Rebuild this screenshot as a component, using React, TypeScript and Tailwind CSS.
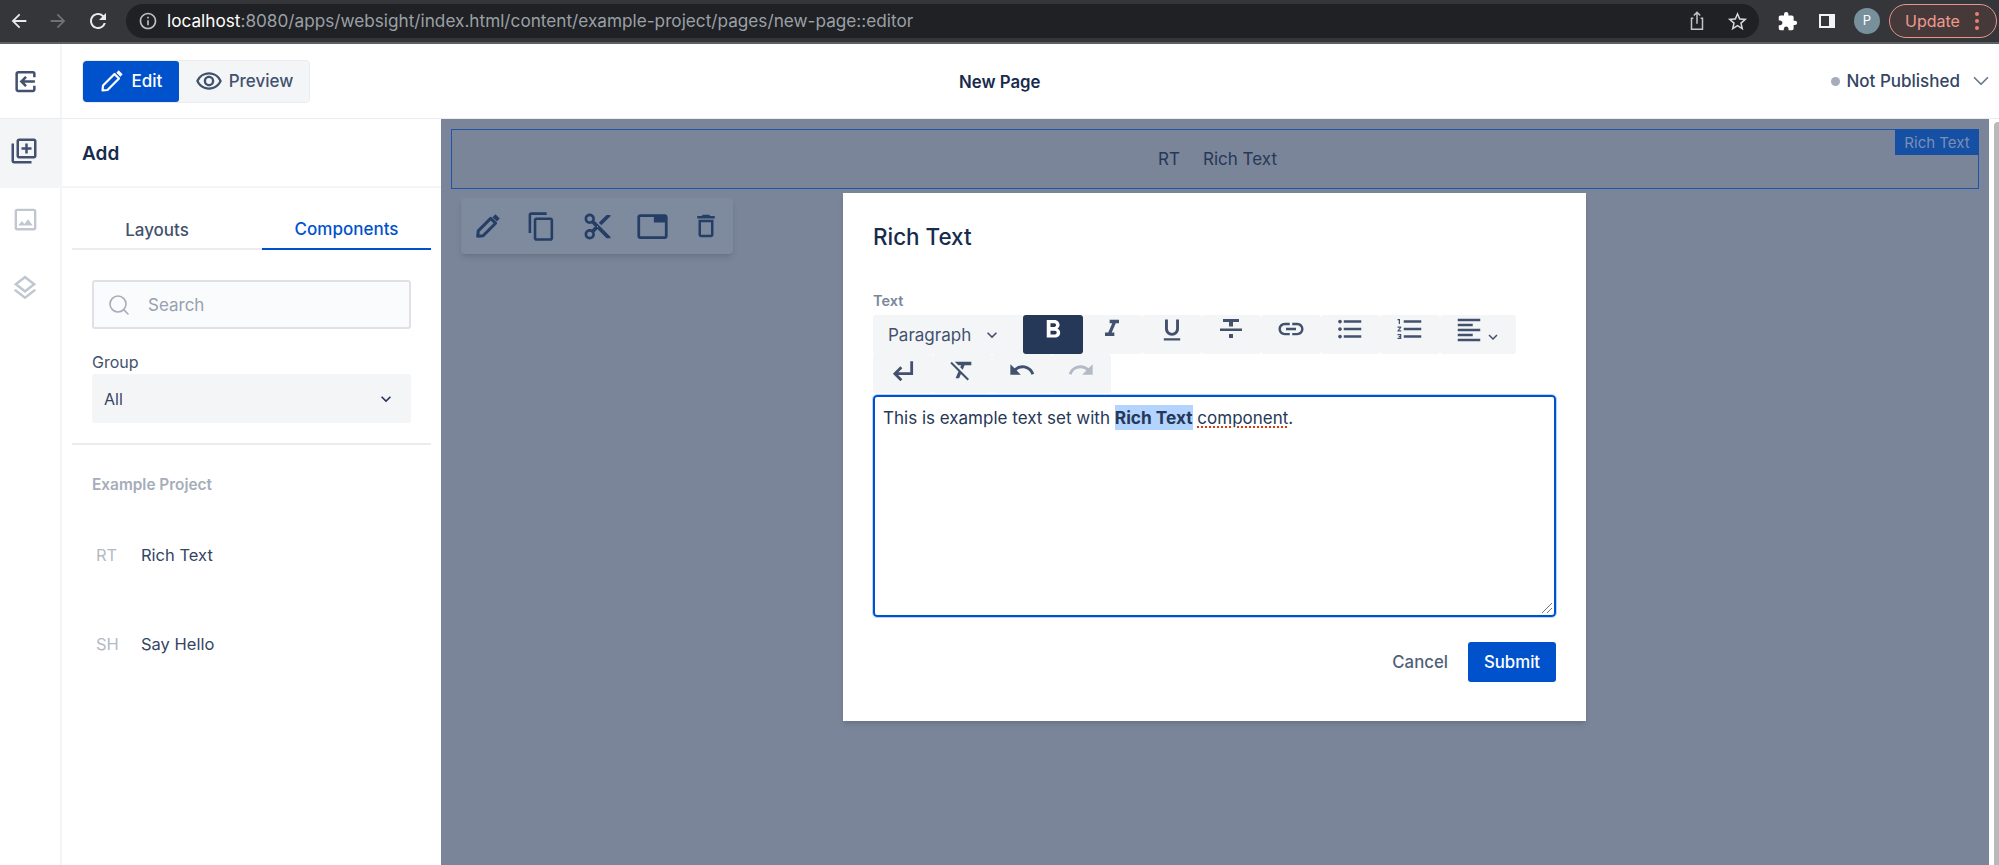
import type { ReactNode } from "react";
import {
  MdOutlineLibraryAdd,
  MdOutlineImage,
  MdOutlineLayers,
  MdOutlineContentCopy,
  MdOutlineContentCut,
  MdOutlineTab,
  MdOutlineDeleteOutline,
  MdOutlineRemoveRedEye,
  MdKeyboardArrowDown,
  MdOutlineInfo,
  MdArrowBack,
  MdArrowForward,
  MdRefresh,
  MdOutlineStarBorder,
  MdExtension,
  MdFormatBold,
  MdFormatItalic,
  MdFormatUnderlined,
  MdLink,
  MdFormatListBulleted,
  MdFormatListNumbered,
  MdFormatAlignLeft,
  MdFormatClear,
  MdUndo,
  MdRedo,
} from "react-icons/md";
import { ChevronDown, Search } from "lucide-react";

function Pencil({ className, weight }: { className?: string; weight: number }) {
  return (
    <svg viewBox="0 0 24 24" fill="none" stroke="currentColor" strokeWidth={weight} strokeLinejoin="round" className={className}>
      <path d="M2.5 21.5 3 16.500 14.500 5 19 9.500 7.500 21Z" />
      <path d="M17.500 2.500 21.500 6.500" strokeWidth={weight + 1} />
    </svg>
  );
}

function ExitIcon() {
  return (
    <svg viewBox="0 0 24 24" fill="none" stroke="#42526e" strokeWidth="2.4" className="h-[25px] w-[25px]">
      <path d="M20.500 8V4.500A1.500 1.500 0 0 0 19 3H5A1.500 1.500 0 0 0 3.500 4.500V19.500A1.500 1.500 0 0 0 5 21H19A1.500 1.500 0 0 0 20.500 19.500V16" />
      <path d="M21 12H8M12.500 7.500 8 12l4.500 4.500" />
    </svg>
  );
}

function ShareIcon() {
  return (
    <svg viewBox="0 0 24 24" fill="none" stroke="#c4c7c5" strokeWidth="1.6" className="h-[22px] w-[22px]">
      <path d="M8 9H6v12h12V9h-2M12 15V3M8.500 6 12 2.500 15.500 6" />
    </svg>
  );
}

function PanelIcon() {
  return (
    <svg viewBox="0 0 20 20" className="h-[20px] w-[20px]">
      <path fill="#f1f3f4" fillRule="evenodd" d="M2 3h16v14H2Zm2 2v10h8V5Z" />
    </svg>
  );
}

function StrikeIcon() {
  return (
    <svg viewBox="0 0 24 24" fill="currentColor" className="h-[24px] w-[24px]">
      <path d="M4 2h16v3h-6v4.500h-4V5H4ZM1 11.500h22v2.500H1ZM10 17h4v4h-4Z" />
    </svg>
  );
}

function ReturnIcon() {
  return (
    <svg viewBox="0 0 24 24" fill="none" stroke="currentColor" strokeWidth="2.6" className="h-[26px] w-[26px]">
      <path d="M20 3v11.500H5M10.500 8.500 4.500 14.500l6 6" />
    </svg>
  );
}

function ToolButton({ children, active, pb }: { children: ReactNode; active?: boolean; pb: string }) {
  return (
    <div className={`flex h-[39px] w-[59.5px] items-center justify-center rounded-[3px] ${pb} ${active ? "bg-[#253858] text-white" : "bg-[#f4f5f7] text-[#42526e]"}`}>
      {children}
    </div>
  );
}

function ChromeBar() {
  return (
    <header className="flex h-[44px] items-center border-b-2 border-[#5f6063] bg-[#35363a]">
      <div className="flex w-[126px] items-center pl-[8px]">
        <MdArrowBack size={22} className="text-[#e8eaed]" />
        <MdArrowForward size={22} className="ml-[17px] text-[#6f7175]" />
        <MdRefresh size={24} className="ml-[17px] text-[#e8eaed]" />
      </div>
      <div className="flex h-[34px] w-[1633px] items-center rounded-full bg-[#202124] pl-[12px]">
        <MdOutlineInfo size={20} className="text-[#bdc1c6]" />
        <span className="ml-[9px] text-[17.2px] whitespace-nowrap text-[#9aa0a6]">
          <span className="text-white">localhost</span>:8080/apps/websight/index.html/content/example-project/pages/new-page::editor
        </span>
        <div className="ml-auto flex items-center gap-[18px] pr-[10px]">
          <ShareIcon />
          <MdOutlineStarBorder size={23} className="text-[#d5d7d8]" />
        </div>
      </div>
      <div className="ml-[18px] flex items-center gap-[19px]">
        <MdExtension size={21} className="text-white" />
        <PanelIcon />
      </div>
      <div className="ml-[17px] flex h-[26px] w-[26px] items-center justify-center rounded-full bg-[#78909c] text-[13px] text-white">P</div>
      <div className="ml-[9px] flex h-[34px] w-[108px] items-center rounded-full border border-[#e8958a] bg-[#46393a] pl-[15px] text-[16px] text-[#ee9a8e]">
        Update
        <span className="ml-[15px] flex flex-col gap-[3px]">
          <i className="h-[4px] w-[4px] rounded-full bg-[#ee7f70]" />
          <i className="h-[4px] w-[4px] rounded-full bg-[#ee7f70]" />
          <i className="h-[4px] w-[4px] rounded-full bg-[#ee7f70]" />
        </span>
      </div>
    </header>
  );
}

function TopBar() {
  return (
    <div className="flex h-[75px] border-b border-[#ebecf0] bg-white">
      <div className="flex w-[62px] shrink-0 items-center justify-start border-r-2 border-[#f4f5f7] pl-[13px]">
        <ExitIcon />
      </div>
      <div className="ml-[21px] flex h-[41px] items-center self-center rounded-[3px] bg-[#f4f5f7] outline outline-[#ebecf0]">
        <div className="flex h-full w-[96px] items-center justify-center gap-[8px] rounded-[3px] bg-[#0052cc] text-[17px] font-medium text-white">
          <Pencil className="h-[24px] w-[24px]" weight={2.2} />
          <span className="pt-[2px]">Edit</span>
        </div>
        <div className="flex h-full w-[130px] items-center justify-center gap-[6px] text-[17px] font-medium text-[#42526e]">
          <MdOutlineRemoveRedEye size={28} />
          <span className="pt-[2px]">Preview</span>
        </div>
      </div>
      <div className="ml-[650px] flex items-center pt-[3px] text-[16.8px] font-semibold text-[#172b4d]">New Page</div>
      <div className="ml-auto flex items-center pr-[5px] text-[17px] font-medium text-[#344563]">
        <i className="mr-[6px] h-[9px] w-[9px] rounded-full bg-[#a5adba]" />
        <span className="pt-[2px]">Not Published</span>
        <ChevronDown size={26} strokeWidth={1.6} className="ml-[8px] text-[#6b778c]" />
      </div>
    </div>
  );
}

function Rail() {
  return (
    <nav className="flex w-[62px] shrink-0 flex-col items-center border-r-2 border-[#f4f5f7] pr-[10px]">
      <div className="-mr-[10px] h-[69px] w-[62px] bg-[#f4f5f7] pt-[17px] pl-[10px]">
        <MdOutlineLibraryAdd size={30} className="text-[#42526e]" />
      </div>
      <MdOutlineImage size={29} className="mt-[17px] text-[#c1c7d0]" />
      <MdOutlineLayers size={30} className="mt-[39px] text-[#c1c7d0]" />
    </nav>
  );
}

function Sidebar() {
  return (
    <aside className="w-[379px] shrink-0 bg-white">
      <div className="flex h-[69px] items-center border-b-2 border-[#f4f5f7] pt-[4px] pl-[20px] text-[19px] font-semibold text-[#172b4d]">Add</div>
      <div className="mx-[10px] mt-[20px]">
        <div className="flex h-[42px] gap-[20px] border-b-2 border-[#ebecf0] text-[17px] font-medium">
          <div className="flex h-[42px] w-[170px] items-center justify-center pt-[4px] text-[#42526e]">Layouts</div>
          <div className="flex h-[42px] w-[169px] items-center justify-center border-b-2 border-[#0052cc] pt-[4px] text-[#0052cc]">Components</div>
        </div>
        <div className="px-[20px]">
          <div className="mt-[30px] flex h-[49px] items-center rounded-[3px] border-2 border-[#dfe1e6] bg-[#fafbfc] pl-[13px] text-[17px] text-[#97a0af]">
            <Search size={24} strokeWidth={1.6} className="text-[#a5adba]" />
            <span className="ml-[17px] pt-[2px]">Search</span>
          </div>
          <div className="mt-[21px] leading-[24px] text-[#42526e]">Group</div>
          <div className="flex h-[49px] items-center justify-between rounded-[3px] bg-[#f4f5f7] pr-[15px] pl-[12px] text-[#344563]">
            All
            <MdKeyboardArrowDown size={20} className="text-[#253858]" />
          </div>
        </div>
        <div className="mt-[20px] border-b-2 border-[#ebecf0]" />
        <div className="mt-[29px] pl-[20px] text-[15.4px] leading-[22px] font-semibold text-[#a5adba]">Example Project</div>
        <div className="mt-[47px] flex h-[24px] items-center pl-[24px] text-[16.5px] text-[#344563]">
          <span className="w-[45px] text-[#b3bac5]">RT</span>
          Rich Text
        </div>
        <div className="mt-[65px] flex h-[24px] items-center pl-[24px] text-[16.5px] text-[#344563]">
          <span className="w-[45px] text-[#b3bac5]">SH</span>
          Say Hello
        </div>
      </div>
    </aside>
  );
}

function Dialog() {
  return (
    <div className="absolute top-[74px] left-[402px] h-[528px] w-[743px] bg-white px-[30px] shadow-md">
      <h2 className="mt-[27px] text-[22.4px] leading-[34px] font-medium text-[#172b4d]">Rich Text</h2>
      <div className="mt-[37px] text-[14.5px] leading-[20px] font-semibold text-[#7a869a]">Text</div>
      <div className="mt-[4px] flex text-[#42526e]">
        <div className="flex h-[39px] w-[150px] items-center rounded-l-[3px] bg-[#f4f5f7] pl-[15px] text-[17px]">
          <span className="pt-[2px]">Paragraph</span>
          <MdKeyboardArrowDown size={20} className="ml-[11px]" />
        </div>
        <ToolButton active pb="pb-[10px]"><MdFormatBold size={30} /></ToolButton>
        <ToolButton pb="pb-[11px]"><MdFormatItalic size={28} /></ToolButton>
        <ToolButton pb="pb-[9px]"><MdFormatUnderlined size={28} /></ToolButton>
        <ToolButton pb="pb-[11px]"><StrikeIcon /></ToolButton>
        <ToolButton pb="pb-[11px]"><MdLink size={30} /></ToolButton>
        <ToolButton pb="pb-[11px]"><MdFormatListBulleted size={30} /></ToolButton>
        <ToolButton pb="pb-[11px]"><MdFormatListNumbered size={30} /></ToolButton>
        <div className="flex h-[39px] w-[76px] items-center justify-center rounded-[3px] bg-[#f4f5f7]">
          <MdFormatAlignLeft size={30} className="mb-[10px]" />
          <MdKeyboardArrowDown size={18} className="mt-[5px]" />
        </div>
      </div>
      <div className="flex">
        <ToolButton pb="pb-[6px]"><ReturnIcon /></ToolButton>
        <ToolButton pb="pb-[7px]"><MdFormatClear size={28} /></ToolButton>
        <ToolButton pb="pb-[7px]"><MdUndo size={28} /></ToolButton>
        <ToolButton pb="pb-[7px]"><span className="text-[#b3bac5]"><MdRedo size={28} /></span></ToolButton>
      </div>
      <div className="relative mt-[2px] h-[222px] rounded-[4px] border-2 border-[#0052cc] pt-[8px] pl-[8px] text-[17px] leading-[25px] text-[#253858] outline outline-[#b3d4ff]">
        This is example text set with <strong className="inline-block bg-[#b3d4ff] text-[17.3px] font-bold">Rich Text</strong>{" "}
        <span className="underline decoration-[#de350b] decoration-dotted decoration-2 underline-offset-2">component</span>.
        <svg viewBox="0 0 12 12" className="absolute right-[1px] bottom-[1px] h-[12px] w-[12px]" stroke="#6b778c" fill="none">
          <path d="M1 11 11 1M6 11 11 6" />
        </svg>
      </div>
      <div className="mt-[25px] flex items-center justify-end text-[16.8px] font-medium">
        <span className="pt-[2px] text-[#505f79]">Cancel</span>
        <div className="ml-[20px] flex h-[40px] w-[88px] items-center justify-center rounded-[3px] bg-[#0052cc] pt-[2px] text-white">Submit</div>
      </div>
    </div>
  );
}

function Canvas() {
  return (
    <div className="flex flex-1">
      <main className="relative flex-1 bg-[#7a8599]">
        <div className="relative mx-[10px] mt-[10px] flex h-[60px] items-center border border-[#1f55a8] pt-[2px] pl-[706px] text-[17px] text-[#253858]">
          <span className="w-[45px]">RT</span>
          Rich Text
          <div className="absolute top-[-1px] right-[-1px] flex h-[26px] w-[84px] items-center justify-center bg-[#1550a5] pt-[2px] text-[15px] text-[#7b8fb3]">Rich Text</div>
        </div>
        <div className="mt-[9px] ml-[20px] flex h-[56px] w-[272px] items-center rounded-[4px] bg-[#7e8a9e] pl-[14px] text-[#253e66] shadow-md">
          <Pencil className="h-[26px] w-[26px]" weight={2.8} />
          <MdOutlineContentCopy size={31} className="ml-[25px]" />
          <MdOutlineContentCut size={31} className="ml-[25px]" />
          <MdOutlineTab size={33} className="ml-[23px]" />
          <MdOutlineDeleteOutline size={30} className="ml-[22px]" />
        </div>
        <Dialog />
      </main>
      <div className="w-[10px] shrink-0 bg-white pt-[3px] pl-[5px]">
        <div className="h-full rounded-tl-[4px] bg-[#b9b9b9]" />
      </div>
    </div>
  );
}

export default function App() {
  return (
    <div className="flex h-[865px] flex-col overflow-hidden bg-white font-['Inter',sans-serif] text-[16px]">
      <ChromeBar />
      <TopBar />
      <div className="flex flex-1">
        <Rail />
        <Sidebar />
        <Canvas />
      </div>
    </div>
  );
}
